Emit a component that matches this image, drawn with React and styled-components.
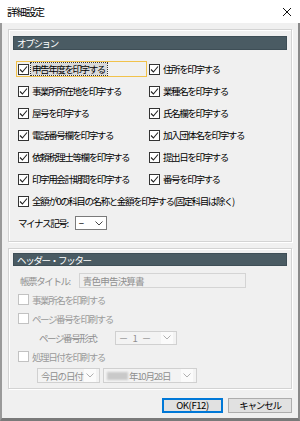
import React from "react";
import styled, { createGlobalStyle, css } from "styled-components";

const GlobalStyle = createGlobalStyle`
  html, body { margin: 0; padding: 0; background: #f0f0f0; }
  body { font-family: "Noto Sans CJK JP", "Noto Sans", sans-serif; }
  * { box-sizing: border-box; }
`;

const Window = styled.div`
  width: 300px;
  height: 421px;
  display: flex;
  flex-direction: column;
  background: #f0f0f0;
  overflow: hidden;
`;

const TitleBar = styled.div`
  height: 23px;
  flex: none;
  background: #ffffff;
  display: flex;
  align-items: center;
  justify-content: space-between;
  padding: 0 8px 0 7px;
`;

const Title = styled.span`
  font-size: 10.5px;
  letter-spacing: -1.3px;
  color: #000;
`;

const Body = styled.div`
  flex: 1;
  display: flex;
  flex-direction: column;
  border-left: 2px solid #9a9a9a;
  border-right: 2px solid #8a8a8a;
  border-bottom: 3px solid #7a7a7a;
  padding: 6px 6px 0 6px;
`;

const Group = styled.div`
  border: 1px solid #d3d3d3;
  box-shadow: inset 1px 1px 0 #ffffff, 1px 1px 0 #ffffff;
  padding: 0 4px ${(p) => p.$pb}px 4px;
  margin-top: ${(p) => p.$mt || 0}px;
`;

const GroupHeader = styled.div`
  margin-top: ${(p) => p.$mt}px;
  height: ${(p) => p.$h}px;
  background: #4a5b63;
  color: #ffffff;
  font-size: 9.5px;
  letter-spacing: -1.3px;
  display: flex;
  align-items: center;
  padding-left: 4px;
  box-shadow: inset 0 0 0 1px #3e4e56;
`;

const OptionsGrid = styled.div`
  margin-top: 8px;
  padding-left: 5px;
  display: grid;
  grid-template-columns: 131px 1fr;
  grid-auto-rows: 22px;
`;

const Cell = styled.div`
  display: flex;
  align-items: center;
  grid-column: ${(p) => (p.$wide ? "1 / span 2" : "auto")};
`;

const CheckItem = styled.label`
  display: flex;
  align-items: center;
  gap: 2px;
  height: 16px;
  margin-left: -2px;
  padding-left: 1px;
  width: ${(p) => (p.$focused ? "131px" : "auto")};
  border: 1px solid ${(p) => (p.$focused ? "#f1c24b" : "transparent")};
  font-size: 9.5px;
  letter-spacing: -1.4px;
  color: ${(p) => (p.$disabled ? "#9a9a9a" : "#000")};
  white-space: nowrap;
`;

const Box = styled.span`
  flex: none;
  width: 11px;
  height: 11px;
  background: #ffffff;
  border: 1px solid ${(p) => (p.$disabled ? "#c2c2c2" : "#333333")};
  display: flex;
  align-items: center;
  justify-content: center;
`;

const LabelText = styled.span`
  padding: 0 2px 0 1px;
  line-height: 12px;
  ${(p) =>
    p.$focused &&
    css`
      background: #d9d9d9;
      outline: 1px dotted #333;
    `}
`;

const Plain = styled.span`
  font-size: 9.5px;
  letter-spacing: -1.4px;
  color: ${(p) => (p.$disabled ? "#8f8f8f" : "#000")};
  white-space: nowrap;
`;

const FieldRow = styled.div`
  display: flex;
  align-items: center;
  gap: ${(p) => p.$gap || 0}px;
  padding-left: ${(p) => p.$indent || 0}px;
  height: ${(p) => p.$h || 19}px;
`;

const Select = styled.div`
  width: ${(p) => p.$w}px;
  height: ${(p) => p.$hh || 14}px;
  border: 1px solid ${(p) => (p.$disabled ? "#d0d0d0" : "#7a7a7a")};
  background: ${(p) => (p.$disabled ? "#f3f3f3" : "#ffffff")};
  display: flex;
  align-items: center;
  justify-content: space-between;
  padding: 0 3px 0 3px;
  font-size: 9.5px;
  letter-spacing: ${(p) => (p.$disabled ? "-1.2px" : "0")};
  color: ${(p) => (p.$disabled ? "#8f8f8f" : "#000")};
  white-space: nowrap;
`;

const SelectValue = styled.span`
  letter-spacing: ${(p) => (p.$spaced ? "1px" : "inherit")};
  white-space: pre;
`;

const ChevronArea = styled.span`
  display: flex;
  align-items: center;
  justify-content: center;
  width: 12px;
  height: 100%;
  background: ${(p) => (p.$light ? "#fbfbfb" : "transparent")};
`;

const TextInput = styled.div`
  width: ${(p) => p.$w}px;
  height: 15px;
  border: 1px solid #d4d4d4;
  background: #f0f0f0;
  display: flex;
  align-items: center;
  padding-left: 3px;
  font-size: 9.5px;
  letter-spacing: -0.8px;
  color: #8f8f8f;
`;

const Blurred = styled.span`
  display: inline-block;
  width: 21px;
  height: 8px;
  margin-right: 1px;
  background: #c9c9c9;
  filter: blur(1.2px);
`;

const Group2Body = styled.div`
  margin-top: 5px;
  padding-left: 5px;
  display: flex;
  flex-direction: column;
`;

const ButtonRow = styled.div`
  margin-top: 9px;
  display: flex;
  justify-content: flex-end;
  gap: 5px;
`;

const Button = styled.button`
  width: ${(p) => p.$w}px;
  height: 15px;
  padding: 0;
  font-family: "Noto Sans CJK JP", "Noto Sans", sans-serif;
  font-size: 9.5px;
  letter-spacing: ${(p) => (p.$primary ? "-0.4px" : "-1.2px")};
  line-height: 1;
  color: #000;
  background: #e1e1e1;
  border: 1px solid ${(p) => (p.$primary ? "#0078d7" : "#adadad")};
  box-shadow: ${(p) => (p.$primary ? "inset 0 0 0 1px #0078d7" : "none")};
`;

const Check = ({ checked, disabled }) => (
  <Box $disabled={disabled}>
    {checked && (
      <svg width="9" height="9" viewBox="0 0 9 9">
        <polyline points="1,4.5 3.4,7 8,1.5" fill="none" stroke="#222" strokeWidth="1.1" />
      </svg>
    )}
  </Box>
);

const Chevron = ({ color = "#555" }) => (
  <svg width="8" height="5" viewBox="0 0 8 5">
    <polyline points="0.5,0.5 4,4 7.5,0.5" fill="none" stroke={color} strokeWidth="1" />
  </svg>
);

const CheckOption = ({ label, checked = true, disabled, focused }) => (
  <CheckItem $focused={focused} $disabled={disabled}>
    <Check checked={checked} disabled={disabled} />
    <LabelText $focused={focused}>{label}</LabelText>
  </CheckItem>
);

const options = [
  ["申告年度を印字する", "住所を印字する"],
  ["事業所所在地を印字する", "業種名を印字する"],
  ["屋号を印字する", "氏名欄を印字する"],
  ["電話番号欄を印字する", "加入団体名を印字する"],
  ["依頼税理士等欄を印字する", "提出日を印字する"],
  ["印字用会計期間を印字する", "番号を印字する"],
];

export default function App() {
  return (
    <Window>
      <GlobalStyle />
      <TitleBar>
        <Title>詳細設定</Title>
        <svg width="10" height="10" viewBox="0 0 10 10">
          <path d="M1 1 L9 9 M9 1 L1 9" stroke="#111" strokeWidth="1" />
        </svg>
      </TitleBar>
      <Body>
        <Group $pb={7}>
          <GroupHeader $mt={6} $h={14}>オプション</GroupHeader>
          <OptionsGrid>
            {options.map(([a, b], i) => (
              <React.Fragment key={a}>
                <Cell>
                  <CheckOption label={a} focused={i === 0} />
                </Cell>
                <Cell>
                  <CheckOption label={b} />
                </Cell>
              </React.Fragment>
            ))}
            <Cell $wide>
              <CheckOption label="全額が0の科目の名称と金額を印字する(固定科目は除く)" />
            </Cell>
            <Cell $wide>
              <FieldRow $gap={7} $h={22}>
                <Plain>マイナス記号:</Plain>
                <Select $w={32}>
                  <span>−</span>
                  <Chevron color="#444" />
                </Select>
              </FieldRow>
            </Cell>
          </OptionsGrid>
        </Group>

        <Group $mt={6} $pb={3}>
          <GroupHeader $mt={4} $h={13}>ヘッダー・フッター</GroupHeader>
          <Group2Body>
            <FieldRow $gap={9} $indent={2}>
              <Plain $disabled>帳票タイトル:</Plain>
              <TextInput $w={167}>青色申告決算書</TextInput>
            </FieldRow>
            <FieldRow>
              <CheckOption label="事業所名を印刷する" checked={false} disabled />
            </FieldRow>
            <FieldRow>
              <CheckOption label="ページ番号を印刷する" checked={false} disabled />
            </FieldRow>
            <FieldRow $indent={21} $gap={18}>
              <Plain $disabled>ページ番号形式:</Plain>
              <Select $w={62} $disabled>
                <SelectValue $spaced>{"－ 1 －"}</SelectValue>
                <ChevronArea $light>
                  <Chevron color="#b0b0b0" />
                </ChevronArea>
              </Select>
            </FieldRow>
            <FieldRow>
              <CheckOption label="処理日付を印刷する" checked={false} disabled />
            </FieldRow>
            <FieldRow $indent={19} $gap={3}>
              <Select $w={63} $hh={15} $disabled>
                <SelectValue>今日の日付</SelectValue>
                <ChevronArea $light>
                  <Chevron color="#b0b0b0" />
                </ChevronArea>
              </Select>
              <Select $w={94} $hh={15} $disabled>
                <SelectValue>
                  <Blurred />
                  年10月28日
                </SelectValue>
                <ChevronArea $light>
                  <Chevron color="#b0b0b0" />
                </ChevronArea>
              </Select>
            </FieldRow>
          </Group2Body>
        </Group>

        <ButtonRow>
          <Button $w={61} $primary>OK(F12)</Button>
          <Button $w={64}>キャンセル</Button>
        </ButtonRow>
      </Body>
    </Window>
  );
}
